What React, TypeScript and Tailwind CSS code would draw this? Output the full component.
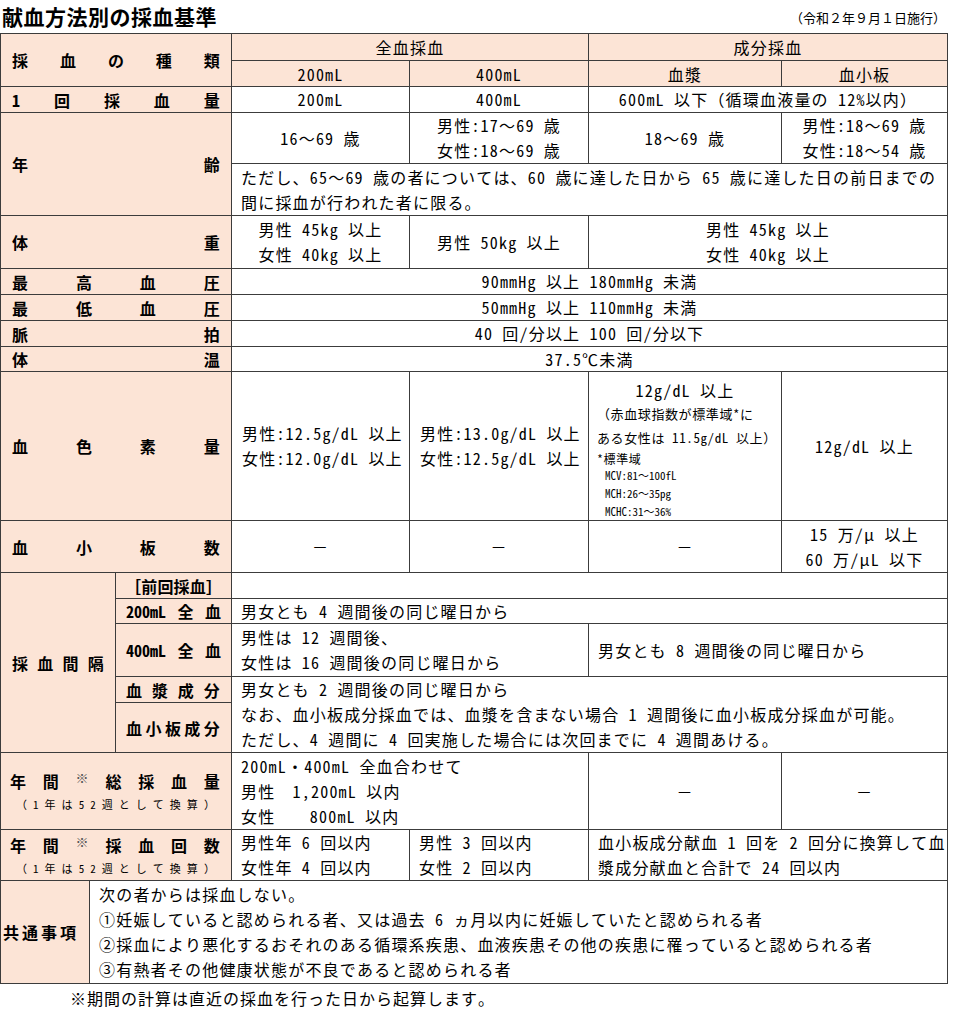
import React from "react";

const FONT = "font-['Noto_Sans_Mono_CJK_JP','Noto_Sans_CJK_JP',sans-serif]";
const HEAD = "bg-[#fce4d6]";
const CELL = "bg-white flex flex-col justify-center leading-[25px]";

const Spread = ({ items, className = "" }: { items: React.ReactNode[]; className?: string }) => (
  <div className={`flex items-center justify-between ${className}`}>
    {items.map((it, i) => (
      <span key={i}>{it}</span>
    ))}
  </div>
);

const Label = ({ chars, className = "" }: { chars: string[]; className?: string }) => (
  <div className={`${HEAD} col-span-2 flex flex-col justify-center pl-[11px] pr-[10px] font-bold ${className}`}>
    <Spread items={chars} />
  </div>
);

const Mark = () => (
  <span className="block text-[13px] leading-none -mt-[8px] font-normal text-[#555]">※</span>
);

const Note = () => (
  <Spread
    className="text-[11px] leading-[20px] font-normal pl-[6px] pr-[6px] tracking-normal"
    items={["（", "1", "年", "は", "5", "2", "週", "と", "し", "て", "換", "算", "）"]}
  />
);

export default function App() {
  return (
    <div className={`w-[960px] text-black ${FONT}`}>
      {/* title */}
      <div className="flex items-center justify-between h-[33px] pl-[2px] pr-[14px]">
        <h1 className="text-[21px] font-bold tracking-[0.5px]">献血方法別の採血基準</h1>
        <span className="text-[13px] mt-[2px]">（令和２年９月１日施行）</span>
      </div>

      <div className="w-[948px] text-[16px] tracking-[1.2px]">
        <div className="grid grid-cols-[114px_115px_177px_178px_192px_165px] grid-rows-[26px_25px_25px_50px_51px_52px_25px_25px_25px_24px_148px_51px_25px_24px_52px_25px_49px_76px_50px] gap-px bg-[#3c3c3c] border border-[#3c3c3c]">
          {/* header */}
          <Label chars={["採", "血", "の", "種", "類"]} className="row-span-2" />
          <div className={`${HEAD} col-span-2 flex items-center justify-center`}>全血採血</div>
          <div className={`${HEAD} col-span-2 flex items-center justify-center`}>成分採血</div>
          <div className={`${HEAD} flex items-center justify-center`}>200mL</div>
          <div className={`${HEAD} flex items-center justify-center`}>400mL</div>
          <div className={`${HEAD} flex items-center justify-center`}>血漿</div>
          <div className={`${HEAD} flex items-center justify-center`}>血小板</div>

          {/* 1回採血量 */}
          <Label chars={["1", "回", "採", "血", "量"]} />
          <div className={`${CELL} items-center`}>200mL</div>
          <div className={`${CELL} items-center`}>400mL</div>
          <div className={`${CELL} items-center col-span-2`}>600mL 以下（循環血液量の 12%以内）</div>

          {/* 年齢 */}
          <Label chars={["年", "齢"]} className="row-span-2" />
          <div className={`${CELL} items-center`}>16～69 歳</div>
          <div className={`${CELL} items-center`}>
            <div>男性:17～69 歳</div>
            <div>女性:18～69 歳</div>
          </div>
          <div className={`${CELL} items-center`}>18～69 歳</div>
          <div className={`${CELL} items-center`}>
            <div>男性:18～69 歳</div>
            <div>女性:18～54 歳</div>
          </div>
          <div className={`${CELL} col-span-4 pl-[9px]`}>
            <div>ただし、65～69 歳の者については、60 歳に達した日から 65 歳に達した日の前日までの</div>
            <div>間に採血が行われた者に限る。</div>
          </div>

          {/* 体重 */}
          <Label chars={["体", "重"]} />
          <div className={`${CELL} items-center`}>
            <div>男性 45kg 以上</div>
            <div>女性 40kg 以上</div>
          </div>
          <div className={`${CELL} items-center`}>男性 50kg 以上</div>
          <div className={`${CELL} items-center col-span-2`}>
            <div>男性 45kg 以上</div>
            <div>女性 40kg 以上</div>
          </div>

          <Label chars={["最", "高", "血", "圧"]} />
          <div className={`${CELL} items-center col-span-4`}>90mmHg 以上 180mmHg 未満</div>
          <Label chars={["最", "低", "血", "圧"]} />
          <div className={`${CELL} items-center col-span-4`}>50mmHg 以上 110mmHg 未満</div>
          <Label chars={["脈", "拍"]} />
          <div className={`${CELL} items-center col-span-4`}>40 回/分以上 100 回/分以下</div>
          <Label chars={["体", "温"]} />
          <div className={`${CELL} items-center col-span-4`}>37.5℃未満</div>

          {/* 血色素量 */}
          <Label chars={["血", "色", "素", "量"]} />
          <div className={`${CELL} pl-[10px] leading-[24px]`}>
            <div>男性:12.5g/dL 以上</div>
            <div>女性:12.0g/dL 以上</div>
          </div>
          <div className={`${CELL} pl-[10px] leading-[24px]`}>
            <div>男性:13.0g/dL 以上</div>
            <div>女性:12.5g/dL 以上</div>
          </div>
          <div className="bg-white flex flex-col pt-[6px] tracking-[0.6px]">
            <div className="text-center leading-[24px] tracking-[1.2px]">12g/dL 以上</div>
            <div className="text-[13px] leading-[24px] pl-[8px]">（赤血球指数が標準域*に</div>
            <div className="text-[13px] leading-[24px] pl-[8px]">ある女性は 11.5g/dL 以上）</div>
            <div className="text-[12px] leading-[17px] pl-[8px]">*標準域</div>
            <div className="text-[11px] leading-[17px] pl-[16px] tracking-normal">MCV:81～100fL</div>
            <div className="text-[11px] leading-[18px] pl-[16px] tracking-normal">MCH:26～35pg</div>
            <div className="text-[11px] leading-[18px] pl-[16px] tracking-normal">MCHC:31～36%</div>
          </div>
          <div className={`${CELL} items-center`}>12g/dL 以上</div>

          {/* 血小板数 */}
          <Label chars={["血", "小", "板", "数"]} />
          <div className={`${CELL} items-center`}>－</div>
          <div className={`${CELL} items-center`}>－</div>
          <div className={`${CELL} items-center`}>－</div>
          <div className={`${CELL} items-center leading-[22px]`}>
            <div>15 万/μ 以上</div>
            <div>60 万/μL 以下</div>
          </div>

          {/* 採血間隔 */}
          <div className={`${HEAD} row-span-5 flex flex-col justify-center pl-[11px] pr-[10px] font-bold`}>
            <Spread items={["採", "血", "間", "隔"]} />
          </div>
          <div className={`${HEAD} flex flex-col justify-center pl-[9px] pr-[9px] font-bold`}>
            <Spread items={["［", "前", "回", "採", "血", "］"]} className="tracking-normal" />
          </div>
          <div className="bg-white col-span-4" />
          <div className={`${HEAD} flex flex-col justify-center pl-[10px] pr-[10px] font-bold tracking-normal`}>
            <Spread items={["200mL", "全", "血"]} />
          </div>
          <div className={`${CELL} col-span-4 pl-[9px]`}>男女とも 4 週間後の同じ曜日から</div>
          <div className={`${HEAD} flex flex-col justify-center pl-[10px] pr-[10px] font-bold tracking-normal`}>
            <Spread items={["400mL", "全", "血"]} />
          </div>
          <div className={`${CELL} col-span-2 pl-[9px] leading-[23px]`}>
            <div>男性は 12 週間後、</div>
            <div>女性は 16 週間後の同じ曜日から</div>
          </div>
          <div className={`${CELL} col-span-2 pl-[9px]`}>男女とも 8 週間後の同じ曜日から</div>
          <div className={`${HEAD} flex flex-col justify-center pl-[10px] pr-[10px] font-bold`}>
            <Spread items={["血", "漿", "成", "分"]} />
          </div>
          <div className={`${CELL} col-span-4 row-span-2 pl-[9px]`}>
            <div>男女とも 2 週間後の同じ曜日から</div>
            <div>なお、血小板成分採血では、血漿を含まない場合 1 週間後に血小板成分採血が可能。</div>
            <div>ただし、4 週間に 4 回実施した場合には次回までに 4 週間あける。</div>
          </div>
          <div className={`${HEAD} flex flex-col justify-center pl-[10px] pr-[10px] font-bold`}>
            <Spread items={["血", "小", "板", "成", "分"]} />
          </div>

          {/* 年間総採血量 */}
          <div className={`${HEAD} col-span-2 flex flex-col justify-center pl-[9px] pr-[10px] font-bold`}>
            <Spread items={["年", "間", <Mark key="m" />, "総", "採", "血", "量"]} className="leading-[26px]" />
            <Note />
          </div>
          <div className={`${CELL} col-span-2 pl-[9px]`}>
            <div>200mL・400mL 全血合わせて</div>
            <div>男性　1,200mL 以内</div>
            <div>女性　　800mL 以内</div>
          </div>
          <div className={`${CELL} items-center`}>－</div>
          <div className={`${CELL} items-center`}>－</div>

          {/* 年間採血回数 */}
          <div className={`${HEAD} col-span-2 flex flex-col justify-center pl-[9px] pr-[10px] font-bold`}>
            <Spread items={["年", "間", <Mark key="m" />, "採", "血", "回", "数"]} className="leading-[26px]" />
            <Note />
          </div>
          <div className={`${CELL} pl-[9px]`}>
            <div>男性年 6 回以内</div>
            <div>女性年 4 回以内</div>
          </div>
          <div className={`${CELL} pl-[9px]`}>
            <div>男性 3 回以内</div>
            <div>女性 2 回以内</div>
          </div>
          <div className={`${CELL} col-span-2 pl-[9px]`}>
            <div>血小板成分献血 1 回を 2 回分に換算して血</div>
            <div>漿成分献血と合計で 24 回以内</div>
          </div>
        </div>

        {/* 共通事項 */}
        <div className="flex h-[103px] border border-t-0 border-[#3c3c3c]">
          <div className={`${HEAD} w-[89px] shrink-0 border-r border-[#3c3c3c] flex items-center pl-[2px] font-bold tracking-[3px]`}>
            共通事項
          </div>
          <div className="flex-1 bg-white flex flex-col justify-center pl-[9px] leading-[25px]">
            <div>次の者からは採血しない。</div>
            <div>①妊娠していると認められる者、又は過去 6 ヵ月以内に妊娠していたと認められる者</div>
            <div>②採血により悪化するおそれのある循環系疾患、血液疾患その他の疾患に罹っていると認められる者</div>
            <div>③有熱者その他健康状態が不良であると認められる者</div>
          </div>
        </div>
      </div>

      <div className="pl-[70px] pt-[3px] text-[16px] tracking-[1px] leading-[22px]">
        ※期間の計算は直近の採血を行った日から起算します。
      </div>
    </div>
  );
}
